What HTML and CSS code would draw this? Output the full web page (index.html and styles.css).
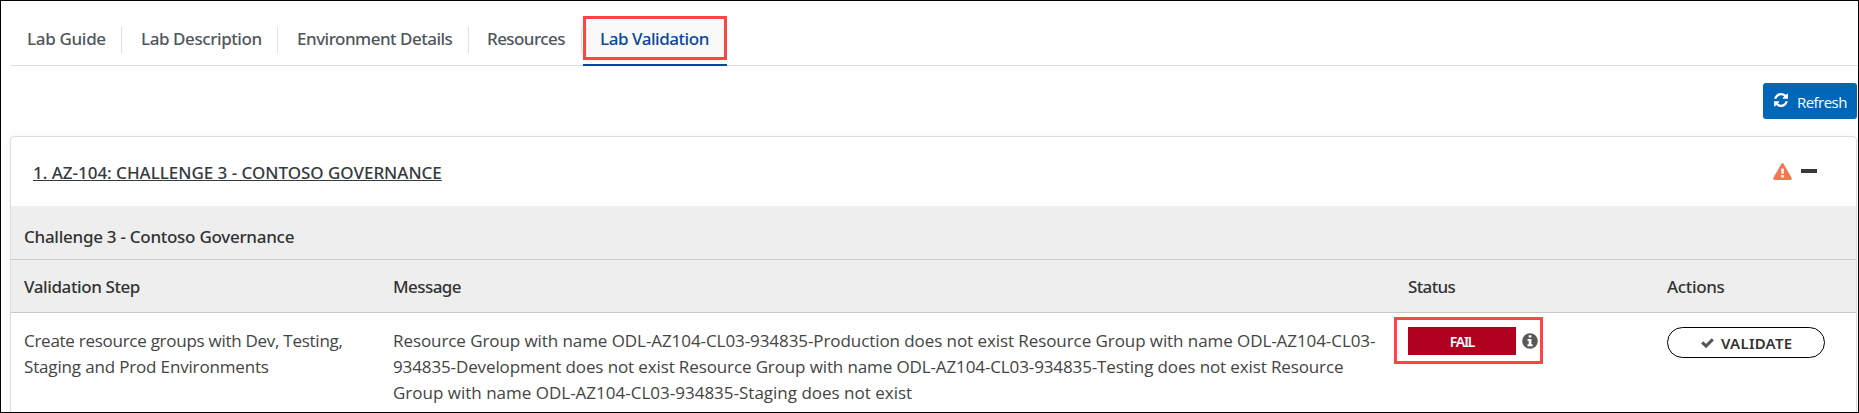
FILE: index.html
```html
<!DOCTYPE html>
<html lang="en">
<head>
<meta charset="utf-8">
<title>Lab Validation</title>
<link rel="stylesheet" href="styles.css">
</head>
<body>
<main class="page">
  <nav class="tabs">
    <a class="tab tab-guide">Lab Guide</a>
    <a class="tab tab-description">Lab Description</a>
    <a class="tab tab-environment">Environment Details</a>
    <a class="tab tab-resources">Resources</a>
    <a class="tab tab-validation"><span class="tab-highlight">Lab Validation</span></a>
  </nav>
  <div class="toolbar">
    <button class="refresh">
      <svg class="refresh-icon" viewBox="0 0 1536 1536"><path fill="currentColor" d="M1511 928q0 5-1 7-64 268-268 434.500T764 1536q-146 0-282.500-55T238 1324l-129 129q-19 19-45 19t-45-19-19-45V960q0-26 19-45t45-19h448q26 0 45 19t19 45-19 45l-137 137q71 66 161 102t187 36q134 0 250-65t186-179q11-17 53-117 8-23 30-23h192q13 0 22.500 9.500t9.500 22.500zM1536 128v448q0 26-19 45t-45 19h-448q-26 0-45-19t-19-45 19-45l138-138Q969 256 768 256q-134 0-250 65T332 500q-11 17-53 117-8 23-30 23H50q-13 0-22.500-9.500T18 608v-7q65-268 270-434.500T768 0q146 0 284 55.500T1297 212l130-129q19-19 45-19t45 19 19 45z"/></svg>
      <span>Refresh</span>
    </button>
  </div>
  <section class="card">
    <header class="card-head">
      <a class="card-title">1. AZ-104: CHALLENGE 3 - CONTOSO GOVERNANCE</a>
      <span class="card-icons">
        <svg class="warning" viewBox="0 0 19 17"><path fill="#f4774d" d="M8.400.7Q9.500-.7 10.600.7L18.700 15Q19.200 16.800 17.500 17H1.500Q-.2 16.800.3 15Z"/><path fill="#fff" d="M8.100 5.500h2.900l-.3 5.300H8.400zM8.200 12h2.600v2.500H8.200z"/></svg>
        <span class="minus"></span>
      </span>
    </header>
    <div class="group-name">Challenge 3 - Contoso Governance</div>
    <div class="row row-head">
      <div class="head-step">Validation Step</div>
      <div class="head-message">Message</div>
      <div class="head-status">Status</div>
      <div class="head-actions">Actions</div>
    </div>
    <div class="row row-body">
      <div class="text">
        <span class="line step-1">Create resource groups with Dev, Testing,</span>
        <span class="line step-2">Staging and Prod Environments</span>
      </div>
      <div class="text">
        <span class="line message-1">Resource Group with name ODL-AZ104-CL03-934835-Production does not exist Resource Group with name ODL-AZ104-CL03-</span>
        <span class="line message-2">934835-Development does not exist Resource Group with name ODL-AZ104-CL03-934835-Testing does not exist Resource</span>
        <span class="line message-3">Group with name ODL-AZ104-CL03-934835-Staging does not exist</span>
      </div>
      <div class="status">
        <span class="fail">FAIL</span>
        <svg class="info" viewBox="0 0 16 16"><circle cx="8" cy="8" r="7.800" fill="#585858"/><path fill="#fff" d="M6.700 2.300h2.700v2.300H6.700zM5.500 6h3.900v5.300h1.200v1.900H5.500v-1.900h1.200V7.800H5.500z"/></svg>
      </div>
      <div class="actions">
        <button class="validate">
          <svg class="check" viewBox="0 0 13 10"><path fill="none" stroke="#555" stroke-width="3" d="M1.200 4.400 5 8.100 11.800 1.400"/></svg>
          <span>VALIDATE</span>
        </button>
      </div>
    </div>
  </section>
</main>
</body>
</html>
```
FILE: styles.css
```css
* {
  box-sizing: border-box;
}

body {
  margin: 0;
  background: #fff;
  color: #333;
  font: 17px/26px "Open Sans", sans-serif;
}

button {
  font: inherit;
  padding: 0;
}

.page {
  height: 413px;
  border: 1px solid #000;
  padding: 15px 1px 0 9px;
  overflow: hidden;
}

.tabs {
  display: flex;
  height: 50px;
  margin-right: -1px;
  border-bottom: 1px solid #dee0e2;
  font-family: "Noto Sans", sans-serif;
  font-weight: 500;
  line-height: 24px;
  color: #50565e;
}

.tab {
  height: 26px;
  margin-top: 11px;
  padding-left: 20px;
  border-right: 1px solid #dee2e6;
  white-space: nowrap;
}

.tab-guide { width: 112px; padding-left: 17px; letter-spacing: -.32px; }
.tab-description { width: 156px; padding-left: 19px; letter-spacing: -.42px; }
.tab-environment { width: 191px; padding-left: 19px; letter-spacing: -.5px; }
.tab-resources { width: 113px; padding-left: 18px; letter-spacing: -.57px; }

.tab-validation {
  width: 144px;
  height: 50px;
  margin: 0 0 0 1px;
  padding: 0;
  border: 0;
  border-bottom: 2px solid #08479b;
  color: #08479b;
  letter-spacing: -.45px;
}

.tab-highlight {
  display: block;
  height: 44px;
  padding: 8px 0 0 14px;
  border: 3px solid #fe4545;
  background: #f9f9f9;
}

.toolbar {
  display: flex;
  justify-content: flex-end;
  height: 70px;
  padding-top: 17px;
}

.refresh {
  display: flex;
  align-items: center;
  width: 94px;
  height: 36px;
  padding: 1px 0 0 11px;
  gap: 9px;
  border: 0;
  border-radius: 3px;
  background: #0067b8;
  color: #fff;
  font-size: 15px;
  letter-spacing: -.55px;
}

.refresh-icon {
  width: 14px;
  height: 14px;
  margin-bottom: 3px;
}

.card {
  height: 300px;
  border: 1px solid #dcdee0;
  border-radius: 4px;
  box-shadow: 0 0 10px rgba(0, 0, 0, .05);
  background: #fff;
}

.card-head {
  display: flex;
  justify-content: space-between;
  height: 69px;
  padding: 23px 39px 0 22px;
  font-family: "Noto Sans", sans-serif;
  font-weight: 500;
  color: #343a40;
}

.card-title {
  height: 26px;
  letter-spacing: -.02px;
  text-decoration: underline;
  text-decoration-thickness: 1px;
  text-underline-offset: 1px;
}

.card-icons {
  display: flex;
  gap: 9px;
  padding-top: 3px;
}

.warning {
  width: 19px;
  height: 17px;
}

.minus {
  width: 16px;
  height: 4px;
  margin-top: 6px;
  background: #343a40;
}

.group-name,
.row-head {
  height: 54px;
  border-bottom: 1px solid #cbc8c8;
  background: #eee;
  font-family: "Noto Sans", sans-serif;
  font-weight: 500;
}

.group-name {
  padding: 18px 0 0 13px;
  letter-spacing: -.27px;
}

.row {
  display: grid;
  grid-template-columns: 369px 1015px 259px 1fr;
  padding-left: 13px;
}

.row-head {
  height: 53px;
  padding-top: 14px;
}

.head-step { letter-spacing: -.4px; }
.head-message { letter-spacing: -.55px; }
.head-status { letter-spacing: -.65px; }
.head-actions { letter-spacing: -.35px; }

.row-body {
  padding-top: 14px;
}

.text {
  color: #444;
  padding-top: 1px;
}

.line {
  display: block;
  white-space: nowrap;
}

.step-1 { letter-spacing: -.27px; }
.step-2 { letter-spacing: -.16px; }
.message-1 { letter-spacing: -.075px; }
.message-2 { letter-spacing: -.12px; }
.message-3 { letter-spacing: 0; }

.status {
  display: flex;
  gap: 6px;
  width: 149px;
  height: 47px;
  margin: -10px 0 0 -14px;
  padding: 7px 0 0 11px;
  border: 3px solid #fe4545;
}

.fail {
  width: 108px;
  height: 28px;
  background: #b00020;
  color: #fff;
  font: 600 14px/29px "Noto Sans", sans-serif;
  letter-spacing: -1.300px;
  text-align: center;
}

.info {
  width: 16px;
  height: 16px;
  margin-top: 6px;
}

.validate {
  display: flex;
  align-items: center;
  width: 158px;
  height: 31px;
  padding: 0 0 0 33px;
  gap: 7px;
  border: 1px solid #000;
  border-radius: 16px;
  background: #fff;
  color: #333;
  font: 600 15px/26px "Noto Sans", sans-serif;
  letter-spacing: .25px;
}

.check {
  width: 13px;
  height: 10px;
}
```
